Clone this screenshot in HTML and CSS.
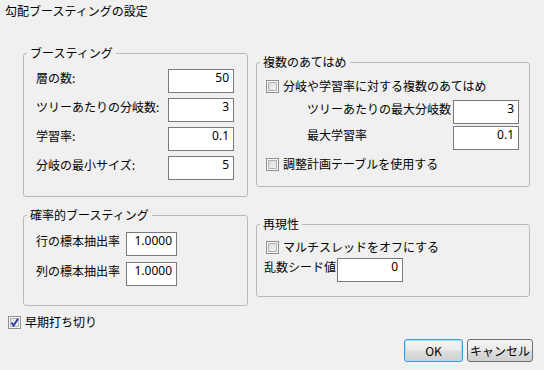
FILE: index.html
```html
<!DOCTYPE html>
<html lang="ja">
<head>
  <meta charset="UTF-8" />
  <title>勾配ブースティングの設定</title>
  <link rel="stylesheet" href="styles.css">
</head>
<body>
  <div class="dialogo">
    <div class="titulo">勾配ブースティングの設定</div>

    <div class="linha">
      <fieldset class="grupo grupo-esq">
        <legend>ブースティング</legend>
        <div class="corpo corpo-boost">
          <label>層の数:</label><input class="num" type="text" value="50">
          <label>ツリーあたりの分岐数:</label><input class="num" type="text" value="3">
          <label>学習率:</label><input class="num" type="text" value="0.1">
          <label>分岐の最小サイズ:</label><input class="num" type="text" value="5">
        </div>
      </fieldset>

      <fieldset class="grupo grupo-dir">
        <legend>複数のあてはめ</legend>
        <div class="corpo corpo-multi">
          <div class="check"><span class="caixa"></span>分岐や学習率に対する複数のあてはめ</div>
          <div class="sub">
            <label>ツリーあたりの最大分岐数</label><input class="num" type="text" value="3">
            <label>最大学習率</label><input class="num" type="text" value="0.1">
          </div>
          <div class="check"><span class="caixa"></span>調整計画テーブルを使用する</div>
        </div>
      </fieldset>
    </div>

    <div class="linha linha2">
      <fieldset class="grupo grupo-esq">
        <legend>確率的ブースティング</legend>
        <div class="corpo corpo-amostra">
          <div class="campo"><label>行の標本抽出率</label><input class="num curto" type="text" value="1.0000"></div>
          <div class="campo"><label>列の標本抽出率</label><input class="num curto" type="text" value="1.0000"></div>
        </div>
      </fieldset>

      <fieldset class="grupo grupo-dir">
        <legend>再現性</legend>
        <div class="corpo corpo-repro">
          <div class="check"><span class="caixa"></span>マルチスレッドをオフにする</div>
          <div class="campo semente"><label>乱数シード値</label><input class="num" type="text" value="0"></div>
        </div>
      </fieldset>
    </div>

    <div class="check parada">
      <span class="caixa marcada">
        <svg width="9" height="9" viewBox="0 0 9 9"><path d="M1.5 4.5 L3.6 7.5 L8 0.8" fill="none" stroke="#2b3596" stroke-width="1.8"/></svg>
      </span>早期打ち切り
    </div>

    <div class="botoes">
      <button class="botao padrao">OK</button>
      <button class="botao">キャンセル</button>
    </div>
  </div>
</body>
</html>
```

FILE: styles.css
```css
body {
  margin: 0;
  background-color: #f0f0f0;
  font-family: "Noto Sans CJK JP", sans-serif;
  font-size: 12px;
  line-height: 16px;
  color: #000;
}

.dialogo {
  width: 544px;
  height: 370px;
}

.titulo {
  padding: 3px 5px 0;
}

.linha {
  display: flex;
  align-items: flex-start;
  gap: 8px;
  margin-top: 26px;
  padding-left: 23px;
}

.linha2 {
  margin-top: 10px;
}

.grupo {
  margin: 0;
  padding: 0;
  min-width: 0;
  border: 1px solid #b9b9b9;
  border-radius: 3px;
}

.grupo legend {
  margin-left: 3px;
  padding: 0 3px;
  line-height: 16px;
}

.grupo-esq {
  width: 225px;
  box-sizing: border-box;
}

.grupo-dir {
  width: 274px;
  box-sizing: border-box;
  margin-top: 9px;
}

label {
  padding-top: 1px;
  white-space: nowrap;
}

.num {
  box-sizing: border-box;
  width: 66px;
  height: 24px;
  margin: 0;
  padding: 0 4px 8px;
  border: 1px solid #7a7a7a;
  background: #fff;
  font-family: "Noto Sans", "Noto Sans CJK JP", sans-serif;
  font-size: 12px;
  line-height: 16px;
  text-align: right;
  color: #000;
  outline: none;
}

.num.curto {
  width: 51px;
}

.corpo-boost {
  display: grid;
  grid-template-columns: 132px 66px;
  row-gap: 5px;
  align-items: start;
  padding: 8px 13px 16px 12px;
}

.corpo-multi {
  padding: 8px 10px 14px 9px;
}

.sub {
  display: grid;
  grid-template-columns: 146px 66px;
  row-gap: 2px;
  align-items: start;
  margin: 6px 0 6px 41px;
}

.corpo-amostra {
  display: flex;
  flex-direction: column;
  gap: 6px;
  padding: 9px 12px 19px;
}

.campo {
  display: flex;
  align-items: flex-start;
  gap: 6px;
}

.corpo-repro {
  padding: 7px 10px 14px 7px;
}

.corpo-repro .check {
  padding-left: 2px;
}

.semente {
  gap: 1px;
  margin-top: 3px;
}

.check {
  display: flex;
  align-items: center;
  gap: 4px;
  height: 16px;
  white-space: nowrap;
}

.caixa {
  box-sizing: border-box;
  display: flex;
  align-items: center;
  justify-content: center;
  width: 13px;
  height: 13px;
  border: 1px solid #8e8f8f;
  background: linear-gradient(135deg, #d3d6da, #f7f7f7);
  box-shadow: inset 0 0 0 1px #fafafa, inset 0 0 0 2px #aeb2b7;
}

.caixa.marcada {
  background: linear-gradient(135deg, #dfe1e8, #f7f7fa);
}

.caixa svg {
  display: block;
}

.parada {
  margin-top: 8px;
  padding-left: 8px;
}

.botoes {
  display: flex;
  justify-content: flex-end;
  gap: 4px;
  margin-top: 9px;
  padding-right: 11px;
}

.botao {
  box-sizing: border-box;
  height: 23px;
  padding: 0;
  border: 1px solid #707070;
  border-radius: 3px;
  background: linear-gradient(#f3f3f3 0%, #ebebeb 48%, #dddddd 52%, #d0d0d0 100%);
  font-family: "Noto Sans CJK JP", sans-serif;
  font-size: 12px;
  color: #000;
  width: 66px;
}

.botao.padrao {
  width: 59px;
  border-color: #3c9fd6;
  box-shadow: inset 0 0 0 1px #a8dcf2;
}
```
